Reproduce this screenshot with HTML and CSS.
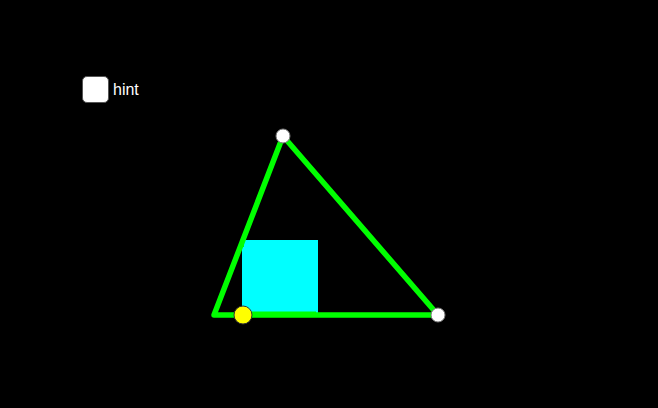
FILE: index.html
```html
<!DOCTYPE html>
<html>
<head>
<meta charset="utf-8">
<link rel="stylesheet" href="styles.css">
</head>
<body>
<div class="stage">
  <svg class="canvas" width="658" height="408" viewBox="0 0 658 408">
    <rect x="242" y="240" width="76" height="75" fill="#00ffff"/>
    <line x1="244" y1="312.5" x2="316" y2="312.5" stroke="#00ff00" stroke-width="2"/>
    <line x1="243.5" y1="244" x2="243.5" y2="247" stroke="#00ff00" stroke-width="1"/>
    <polygon points="283,136 438,315 214,315" fill="none" stroke="#00ff00" stroke-width="5.5" stroke-linejoin="round"/>
    <circle cx="283" cy="136" r="7" fill="#ffffff" stroke="#777" stroke-width="1"/>
    <circle cx="438" cy="315" r="7" fill="#ffffff" stroke="#777" stroke-width="1"/>
    <circle cx="243" cy="315" r="9" fill="#ffff00" stroke="#333" stroke-width="1"/>
  </svg>
  <label class="hint">
    <span class="box"></span>
    <span class="label">hint</span>
  </label>
</div>
</body>
</html>
```
FILE: styles.css
```css
html, body {
  margin: 0;
  padding: 0;
  background: #000;
}
.stage {
  position: relative;
  width: 658px;
  height: 408px;
  background: #000;
  overflow: hidden;
}
.canvas {
  position: absolute;
  left: 0;
  top: 0;
}
.hint {
  position: relative;
  display: inline-flex;
  align-items: center;
  gap: 4px;
  margin: 76px 0 0 82px;
  font-family: "Liberation Sans", Arial, sans-serif;
  font-size: 16px;
  color: #fff;
}
.box {
  width: 25px;
  height: 25px;
  background: #fff;
  border: 1px solid #555;
  border-radius: 5px;
}
.label {
  line-height: 20px;
  padding-top: 1px;
}
```
